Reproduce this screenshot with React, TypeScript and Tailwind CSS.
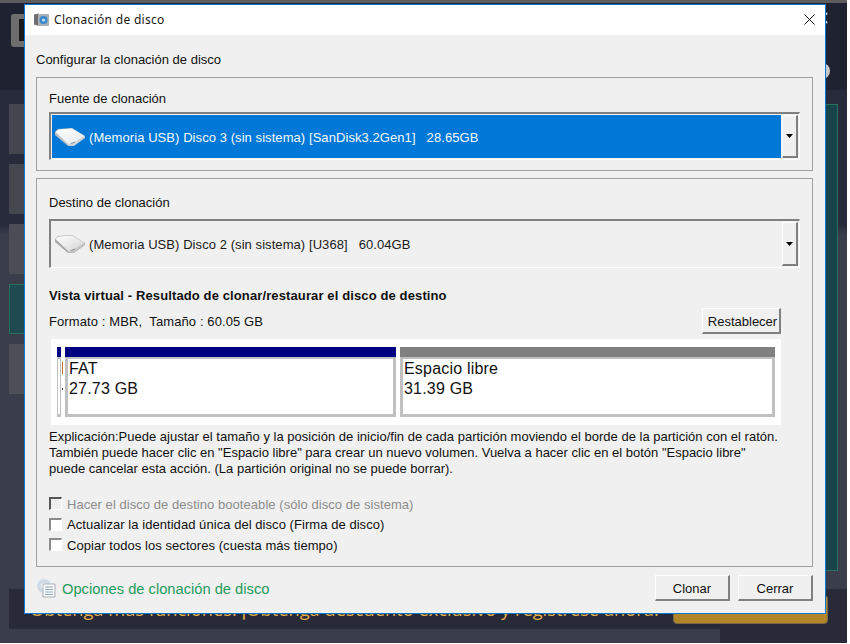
import React from "react";

const font = { fontFamily: '"Liberation Sans", Arial, sans-serif' };

function DiskIcon({ dim = false }: { dim?: boolean }) {
  const id = dim ? "d1" : "d2";
  return (
    <svg width="32" height="20" viewBox="0 0 32 20" className="shrink-0">
      <defs>
        <linearGradient id={id} x1="0" y1="0" x2="1" y2="1">
          <stop offset="0" stopColor="#ffffff" />
          <stop offset="1" stopColor={dim ? "#d4d4d4" : "#e4e8ea"} />
        </linearGradient>
      </defs>
      <path d="M1 5 L4 2 L18 1 L31 9 L31 11 L20 19 L14 19 L1 8 Z" fill={dim ? "#a8a8a8" : "#b7c0c6"} />
      <path d="M1.5 5 L4.5 2.5 L18 1.5 L30.5 9 L19 16.5 L14 17 Z" fill={`url(#${id})`} />
      <path d="M14 17 L19 16.5 L30.5 9.5 L30.5 11 L20 18.5 L14 18.5 Z" fill={dim ? "#c8c8c8" : "#d0d6da"} />
      <path d="M17 16.5 L21 15" stroke="#8b9298" strokeWidth="1" />
    </svg>
  );
}

function Combo({ selected, h, children }: { selected?: boolean; h: string; children: React.ReactNode }) {
  return (
    <div className={`flex ${h} border-t-2 border-l-2 border-t-[#808080] border-l-[#808080] border-r border-b border-r-white border-b-white p-px`}>
      <div className={`flex min-w-0 flex-1 items-center pl-[2px] text-[13px] tracking-[0.07px] ${selected ? "bg-[#0078d7] text-[#f4f8fc]" : "text-[#1a1a1a]"}`}>
        {children}
      </div>
      <div className="ml-px flex w-[16px] items-center justify-center border-t border-l border-t-white border-l-white border-r-2 border-b-2 border-r-[#808080] border-b-[#808080] bg-[#f0f0f0]">
        <svg width="7" height="4" viewBox="0 0 7 4"><path d="M0 0h7L3.5 4z" fill="#000" /></svg>
      </div>
    </div>
  );
}

function Raised({ w, pad, children }: { w: string; pad?: string; children: React.ReactNode }) {
  return (
    <button className={`flex h-[26px] ${w} ${pad ?? ""} items-center justify-center border-t border-l border-t-white border-l-white border-r-2 border-b-2 border-r-[#808080] border-b-[#808080] bg-[#f0f0f0] pt-[2px] text-[13px] text-[#111]`}>
      {children}
    </button>
  );
}

function Partition({ w, head, children }: { w: string; head: string; children?: React.ReactNode }) {
  return (
    <div className={`flex ${w} shrink-0 flex-col overflow-hidden`}>
      <div className={`h-[10px] ${head}`} />
      <div className={`h-[60px] overflow-hidden border-t-2 border-[#c0c0c0] bg-white ${children ? "border-x-[3px] border-b-[3px] pl-px" : "border-x-[1px] border-b-[3px]"} text-[16px] leading-[20px] tracking-[0.2px] text-[#111]`}>
        {children}
      </div>
    </div>
  );
}

function Check({ label, off }: { label: string; off?: boolean }) {
  return (
    <div className="flex h-[20.5px] items-center text-[13px]">
      <span className={`mt-[-1px] h-[13px] w-[13px] shrink-0 border-t-2 border-l-2 border-r border-b border-r-white border-b-white ${off ? "border-t-[#555] border-l-[#555] bg-[#f0f0f0]" : "border-t-[#8a8a8a] border-l-[#8a8a8a] bg-white"}`} />
      <span className={`ml-[5px] tracking-[0.055px] ${off ? "text-[#8c8c8c]" : "text-[#111]"}`}>{label}</span>
    </div>
  );
}

export default function App() {
  return (
    <div className="relative h-[644px] w-[850px] overflow-hidden bg-white" style={font}>
      {/* Application behind the dialog */}
      <div className="flex h-[643px] w-[847px] flex-col bg-[linear-gradient(to_bottom,#1f2331_0px,#1f2331_90px,#282b3b_90px,#282b3b_225px,#3a3d4a_235px,#3a3d4a_100%)]">
        <div className="h-[3px] bg-[#5c5c5c]" />
        <div className="flex h-[101px] justify-between pl-[11px] pr-[17px] pt-[11px]">
          <div className="h-[33px] w-[30px] rounded-[3px] bg-[#6e6e6e] pl-[8px] pt-[5px]">
            <div className="h-[22px] w-[14px] bg-[#1a1a1a]" />
          </div>
          <div className="flex flex-col items-end">
            <svg width="10" height="12" viewBox="0 0 10 12" className="mt-[-2px]">
              <path d="M7 1 L2 6 L7 11" fill="none" stroke="#e8e8e8" strokeWidth="2" />
            </svg>
            <div className="mt-[39px] h-[16px] w-[16px] rounded-full bg-[#c8c8c8]" />
          </div>
        </div>
        <div className="flex flex-1 justify-between pl-[9px] pr-[9px]">
          <div className="flex w-[60px] flex-col gap-[10px]">
            <div className="h-[50px] bg-[#43464f]" />
            <div className="h-[50px] bg-[#45474f]" />
            <div className="h-[50px] bg-[#4a4c56]" />
            <div className="h-[50px] border border-[#2a7060] bg-[#1e4a50]" />
            <div className="h-[50px] bg-[#4c4e58]" />
          </div>
          <div className="h-[467px] w-[60px] border border-[#2a7060] bg-[#17444a]" />
        </div>
        <div className="bg-[linear-gradient(to_right,#3a3d4a_85%,#282a38_85%)] pb-[14px] pl-[9px]">
          <div className="flex h-[40px] items-center justify-between bg-[#282a38] pl-[21px] pr-[19px]">
            <span className="whitespace-nowrap text-[18.3px] text-[#e3ae49]" style={{ fontFamily: '"Open Sans", sans-serif' }}>
              Obtenga más funciones. ¡Obtenga descuento exclusivo y regístrese ahora!
            </span>
            <span className="h-[29px] w-[155px] rounded-[4px] border border-[#7a6a48] bg-[#b2852b]" />
          </div>
        </div>
      </div>

      {/* Dialog */}
      <div className="absolute left-[24px] top-[4px] flex h-[610px] w-[802px] flex-col border border-[#0078d7] bg-[#f0f0f0] text-[#111]">
        <div className="flex h-[30px] shrink-0 items-center justify-between bg-white pl-[8px] pr-[10px]">
          <div className="flex items-center">
            <svg width="16" height="14" viewBox="0 0 16 14">
              <path d="M1 1.5 L6 0.5 L6 13 L1 11.5 Z" fill="#6e6e6e" />
              <rect x="5" y="1" width="11" height="12" fill="#a9b1b8" />
              <circle cx="10.5" cy="7" r="4" fill="#3b87c9" />
              <circle cx="10.5" cy="7" r="1.5" fill="#cfe6f7" />
            </svg>
            <span className="ml-[5px] text-[12px] tracking-[0.3px] text-[#1a1a1a]" style={{ fontFamily: '"Noto Sans", sans-serif' }}>
              Clonación de disco
            </span>
          </div>
          <svg width="11" height="11" viewBox="0 0 11 11" className="mt-[-1px]">
            <path d="M0.5 0.5 L10.5 10.5 M10.5 0.5 L0.5 10.5" stroke="#111" strokeWidth="1" />
          </svg>
        </div>

        <div className="flex flex-1 flex-col pl-[11px] pr-[12px]">
          <div className="mt-[17px] h-[16px] text-[13px] leading-[16px]">Configurar la clonación de disco</div>

          <section className="mt-[9px] h-[94px] border border-[#a0a0a0] px-[12px] pt-[13px]">
            <div className="h-[16px] text-[13px] leading-[16px]">Fuente de clonación</div>
            <div className="mt-[5px]">
              <Combo selected h="h-[48px]">
                <DiskIcon />
                <span className="ml-[3px] pt-[2px]">(Memoria USB) Disco 3 (sin sistema) [SanDisk3.2Gen1]&nbsp;&nbsp;&nbsp;28.65GB</span>
              </Combo>
            </div>
          </section>

          <section className="mt-[7px] h-[389px] border border-[#a0a0a0] px-[12px] pt-[16px]">
            <div className="h-[16px] text-[13px] leading-[16px]">Destino de clonación</div>
            <div className="mt-[8px]">
              <Combo h="h-[49px]">
                <DiskIcon dim />
                <span className="ml-[3px] pt-[2px]">(Memoria USB) Disco 2 (sin sistema) [U368]&nbsp;&nbsp;&nbsp;60.04GB</span>
              </Combo>
            </div>
            <div className="mt-[20px] h-[16px] text-[13px] font-bold leading-[16px] tracking-[0.12px]">
              Vista virtual - Resultado de clonar/restaurar el disco de destino
            </div>
            <div className="mt-[4px] flex items-center justify-between pr-[19px]">
              <span className="pt-[2px] text-[13px] tracking-[0.1px]">Formato : MBR,&nbsp; Tamaño : 60.05 GB</span>
              <Raised w="w-[79px]" pad="pl-[3px]">Restablecer</Raised>
            </div>
            <div className="ml-[2px] mt-[5px] flex h-[86px] w-[730px] bg-white pl-[6px] pt-[8px]">
              <Partition w="w-[4px]" head="bg-[#000080]" />
              <div className="w-[4px] pl-px pt-[15px]">
                <div className="h-[12px] w-px bg-[#b5713a]" />
                <div className="mt-[14px] h-[2px] w-px bg-[#333]" />
              </div>
              <Partition w="w-[331px]" head="bg-[#000080]">
                FAT
                <br />
                27.73 GB
              </Partition>
              <div className="w-[4px]" />
              <Partition w="w-[375px]" head="bg-[#808080]">
                Espacio libre
                <br />
                31.39 GB
              </Partition>
            </div>
            <p className="mt-[4px] whitespace-nowrap text-[13px] leading-[16px]">
              <span className="tracking-[0.015px]">Explicación:Puede ajustar el tamaño y la posición de inicio/fin de cada partición moviendo el borde de la partición con el ratón.</span>
              <br />
              También puede hacer clic en "Espacio libre" para crear un nuevo volumen. Vuelva a hacer clic en el botón "Espacio libre"
              <br />
              puede cancelar esta acción. (La partición original no se puede borrar).
            </p>
            <div className="mt-[17px]">
              <Check off label="Hacer el disco de destino booteable (sólo disco de sistema)" />
              <Check label="Actualizar la identidad única del disco (Firma de disco)" />
              <Check label="Copiar todos los sectores (cuesta más tiempo)" />
            </div>
          </section>

          <div className="mt-[8px] flex items-center justify-between">
            <div className="flex items-center">
              <svg width="20" height="20" viewBox="0 0 20 20">
                <circle cx="8" cy="8" r="7" fill="#cfdbe6" />
                <circle cx="8" cy="8" r="3" fill="#f4f7fa" />
                <path d="M7 6 H19 V19 H7 Z" fill="#fbfcfd" stroke="#a8afb5" />
                <path d="M9 9h8M9 11.5h8M9 14h8M9 16.5h8" stroke="#8da6bb" />
              </svg>
              <span className="ml-[6px] pt-[2px] text-[14.7px] text-[#1e9c5c]">Opciones de clonación de disco</span>
            </div>
            <div className="flex gap-[8px]">
              <Raised w="w-[75px]">Clonar</Raised>
              <Raised w="w-[75px]">Cerrar</Raised>
            </div>
          </div>
        </div>
      </div>
    </div>
  );
}
